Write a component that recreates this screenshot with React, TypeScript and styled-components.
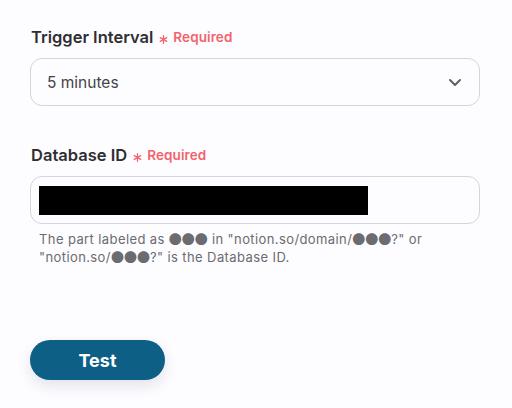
import React from "react";
import styled, { createGlobalStyle } from "styled-components";

const Global = createGlobalStyle`
  html, body { margin: 0; padding: 0; background: #fdfcff; }
  body { font-family: Inter, "Noto Sans", sans-serif; }
`;

const Page = styled.div`
  width: 512px;
  height: 408px;
  box-sizing: border-box;
  padding: 26px 32px 0 30px;
  display: flex;
  flex-direction: column;
`;

const Field = styled.div<{ $mb: number }>`
  display: flex;
  flex-direction: column;
  margin-bottom: ${(p) => p.$mb}px;
`;

const Label = styled.div`
  display: flex;
  align-items: center;
  height: 22px;
  margin-left: 1px;
  margin-bottom: 10px;
  font-size: 16.5px;
  font-weight: 600;
  color: #2f2f33;
`;

const Required = styled.span`
  display: inline-flex;
  align-items: center;
  margin-left: 6px;
  font-size: 13.5px;
  font-weight: 600;
  letter-spacing: 0.1px;
  color: #f2646c;
`;

const Star = styled.svg`
  width: 9px;
  height: 9px;
  margin-right: 5px;
  position: relative;
  top: 2px;
`;

const Box = styled.div`
  height: 48px;
  box-sizing: border-box;
  border: 1px solid #d4d3e0;
  border-radius: 12px;
  background: #fdfdff;
  display: flex;
  align-items: center;
  padding: 0 17px 0 8px;
`;

const Value = styled.span`
  flex: 1;
  font-size: 15.5px;
  color: #444448;
  padding-left: 8px;
`;

const Redacted = styled.div`
  width: 329px;
  height: 29px;
  background: #000;
`;

const Help = styled.div`
  margin-top: 6px;
  padding-left: 9px;
  font-size: 13px;
  line-height: 18px;
  color: #6b6b70;
  letter-spacing: 0.4px;
`;

const Dots = styled.span`
  font-family: "Noto Sans CJK JP", sans-serif;
  letter-spacing: 0;
`;

const Button = styled.button`
  width: 135px;
  height: 40px;
  border: none;
  border-radius: 20px;
  background: #0d5f86;
  color: #fff;
  font-family: Inter, sans-serif;
  font-size: 18px;
  font-weight: 700;
  box-shadow: 0 6px 14px rgba(40, 50, 90, 0.12);
  padding: 0;
`;

const Asterisk = () => (
  <Star viewBox="0 0 10 10">
    <g stroke="#f2646c" strokeWidth="1.4" strokeLinecap="round">
      <line x1="5" y1="0.8" x2="5" y2="9.2" />
      <line x1="1.4" y1="2.9" x2="8.6" y2="7.1" />
      <line x1="1.4" y1="7.1" x2="8.6" y2="2.9" />
    </g>
  </Star>
);

export default function App() {
  return (
    <>
      <Global />
      <Page>
        <Field $mb={38}>
          <Label>
            Trigger Interval
            <Required>
              <Asterisk />
              Required
            </Required>
          </Label>
          <Box>
            <Value>5 minutes</Value>
            <svg width="14" height="10" viewBox="0 0 14 10">
              <path d="M2 3 L7 8 L12 3" fill="none" stroke="#5f5f68" strokeWidth="2" strokeLinecap="round" strokeLinejoin="round" />
            </svg>
          </Box>
        </Field>
        <Field $mb={74}>
          <Label>
            Database ID
            <Required>
              <Asterisk />
              Required
            </Required>
          </Label>
          <Box>
            <Redacted />
          </Box>
          <Help>
            The part labeled as <Dots>●●●</Dots> in "notion.so/domain/<Dots>●●●</Dots>?" or
            <br />
            "notion.so/<Dots>●●●</Dots>?" is the Database ID.
          </Help>
        </Field>
        <div>
          <Button>Test</Button>
        </div>
      </Page>
    </>
  );
}
